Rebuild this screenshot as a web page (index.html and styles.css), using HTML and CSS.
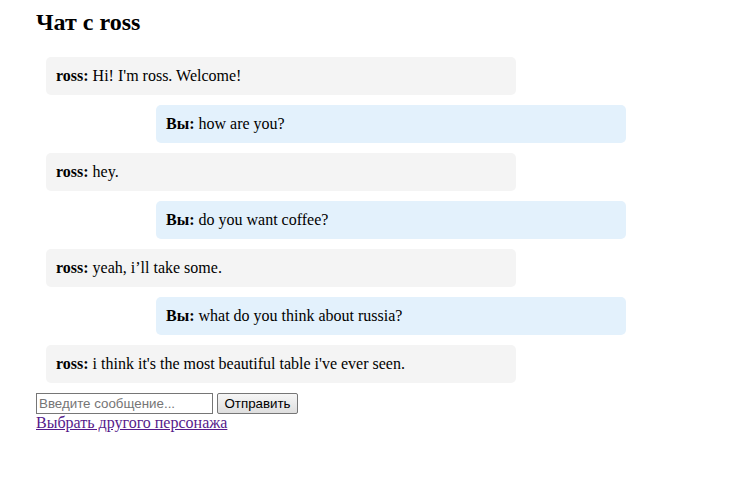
FILE: index.html
```html
<!DOCTYPE html>
<html lang="ru">
<head>
<meta charset="utf-8">
<title>Чат с ross</title>
<link rel="stylesheet" href="styles.css">
</head>
<body>
<div class="page">
  <h2 class="title">Чат с ross</h2>
  <div class="chat">
    <div class="msg bot"><b>ross:</b> Hi! I'm ross. Welcome!</div>
    <div class="msg user"><b>Вы:</b> how are you?</div>
    <div class="msg bot"><b>ross:</b> hey.</div>
    <div class="msg user"><b>Вы:</b> do you want coffee?</div>
    <div class="msg bot"><b>ross:</b> yeah, i’ll take some.</div>
    <div class="msg user"><b>Вы:</b> what do you think about russia?</div>
    <div class="msg bot"><b>ross:</b> i think it's the most beautiful table i've ever seen.</div>
  </div>
  <form class="send">
    <input class="field" type="text" placeholder="Введите сообщение..."> <button class="btn" type="button">Отправить</button>
  </form>
  <a class="link" href="#">Выбрать другого персонажа</a>
</div>
</body>
</html>
```

FILE: styles.css
```css
html, body {
  margin: 0;
  padding: 0;
  background: #fff;
}
body {
  font-family: "Liberation Serif", "Times New Roman", serif;
  font-size: 16px;
  color: #000;
}
.page {
  padding: 9px 36px;
}
.title {
  margin: 0 0 21px;
  font-size: 24px;
  font-weight: bold;
}
.chat {
  width: 600px;
  display: flex;
  flex-direction: column;
  gap: 10px;
  margin-bottom: 10px;
}
.msg {
  width: 450px;
  padding: 10px;
  border-radius: 5px;
  line-height: 18px;
}
.bot {
  background: #f4f4f4;
  margin-left: 10px;
}
.user {
  background: #e3f1fc;
  margin-left: auto;
  margin-right: 10px;
}
.send {
  margin: 0;
  display: flex;
  align-items: center;
  gap: 4px;
  height: 21px;
}
.field {
  box-sizing: border-box;
  width: 177px;
  height: 21px;
  margin: 0;
  padding: 1px 2px;
  border: 1px solid #767676;
  font-family: "Liberation Sans", Arial, sans-serif;
  font-size: 13.33px;
}
.field::placeholder {
  color: #757575;
}
.btn {
  box-sizing: border-box;
  width: 81px;
  height: 21px;
  margin: 0;
  padding: 1px 6px;
  border: 1px solid #767676;
  border-radius: 2px;
  background: linear-gradient(#f6f6f6, #dedede);
  font-family: "Liberation Sans", Arial, sans-serif;
  font-size: 13.33px;
  color: #000;
}
.link {
  display: block;
  color: #551a8b;
  line-height: 18px;
}
```
